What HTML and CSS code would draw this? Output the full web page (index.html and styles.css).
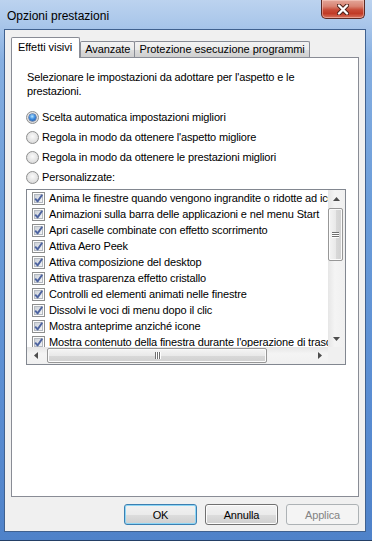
FILE: index.html
```html
<!DOCTYPE html>
<html>

<head>
    <meta charset="UTF-8">
    <title>Opzioni prestazioni</title>
    <link rel="stylesheet" href="styles.css">
</head>

<body>
    <svg class="defs" width="0" height="0">
        <defs>
            <linearGradient id="cbFill" x1="0" y1="0" x2="1" y2="1">
                <stop offset="0" stop-color="#c9ced6"/>
                <stop offset="1" stop-color="#f6f7f8"/>
            </linearGradient>
            <symbol id="check" viewBox="0 0 13 13">
                <rect x="0.5" y="0.5" width="12" height="12" fill="#fdfdfd" stroke="#8e8f8f"/>
                <rect x="2.5" y="2.5" width="8" height="8" fill="url(#cbFill)" stroke="#b4b9c0"/>
                <path d="M3.2 6.6 L5.6 9.4 L10.2 2.8" fill="none" stroke="#4e64a0" stroke-width="1.9" stroke-linejoin="round"/>
            </symbol>
        </defs>
    </svg>

    <div class="window">
        <div class="titlebar">
            <span class="title">Opzioni prestazioni</span>
            <div class="close">
                <svg width="12" height="11" viewBox="0 0 12 11">
                    <path d="M2 1.5 L10 9.5 M10 1.5 L2 9.5" stroke="#4a1f18" stroke-width="4.2" stroke-linecap="round"/>
                    <path d="M2 1.5 L10 9.5 M10 1.5 L2 9.5" stroke="#ffffff" stroke-width="2.4" stroke-linecap="round"/>
                </svg>
            </div>
        </div>

        <div class="client">
            <div class="tabs">
                <div class="tab active">Effetti visivi</div>
                <div class="tab">Avanzate</div>
                <div class="tab">Protezione esecuzione programmi</div>
            </div>

            <div class="panel">
                <p class="intro">Selezionare le impostazioni da adottare per l'aspetto e le prestazioni.</p>

                <div class="options">
                    <div class="option"><span class="radio checked"></span>Scelta automatica impostazioni migliori</div>
                    <div class="option"><span class="radio"></span>Regola in modo da ottenere l'aspetto migliore</div>
                    <div class="option"><span class="radio"></span>Regola in modo da ottenere le prestazioni migliori</div>
                    <div class="option"><span class="radio"></span>Personalizzate:</div>
                </div>

                <div class="listbox">
                    <div class="items">
                        <div class="item"><svg class="cb"><use href="#check"/></svg>Anima le finestre quando vengono ingrandite o ridotte ad icona</div>
                        <div class="item"><svg class="cb"><use href="#check"/></svg>Animazioni sulla barra delle applicazioni e nel menu Start</div>
                        <div class="item"><svg class="cb"><use href="#check"/></svg>Apri caselle combinate con effetto scorrimento</div>
                        <div class="item"><svg class="cb"><use href="#check"/></svg>Attiva Aero Peek</div>
                        <div class="item"><svg class="cb"><use href="#check"/></svg>Attiva composizione del desktop</div>
                        <div class="item"><svg class="cb"><use href="#check"/></svg>Attiva trasparenza effetto cristallo</div>
                        <div class="item"><svg class="cb"><use href="#check"/></svg>Controlli ed elementi animati nelle finestre</div>
                        <div class="item"><svg class="cb"><use href="#check"/></svg>Dissolvi le voci di menu dopo il clic</div>
                        <div class="item"><svg class="cb"><use href="#check"/></svg>Mostra anteprime anziché icone</div>
                        <div class="item"><svg class="cb"><use href="#check"/></svg>Mostra contenuto della finestra durante l'operazione di trascinamento</div>
                    </div>

                    <div class="vscroll">
                        <div class="arrow"><svg width="7" height="4"><path d="M0 4 L3.5 0 L7 4 Z" fill="#4d4d4d"/></svg></div>
                        <div class="vtrack">
                            <div class="vthumb"><span class="grip-h"></span><span class="grip-h"></span><span class="grip-h"></span></div>
                        </div>
                        <div class="arrow"><svg width="7" height="4"><path d="M0 0 L3.5 4 L7 0 Z" fill="#4d4d4d"/></svg></div>
                    </div>

                    <div class="hscroll">
                        <div class="arrow"><svg width="4" height="7"><path d="M4 0 L0 3.5 L4 7 Z" fill="#4d4d4d"/></svg></div>
                        <div class="htrack">
                            <div class="hthumb"><span class="grip-v"></span><span class="grip-v"></span><span class="grip-v"></span></div>
                        </div>
                        <div class="arrow"><svg width="4" height="7"><path d="M0 0 L4 3.5 L0 7 Z" fill="#4d4d4d"/></svg></div>
                    </div>

                    <div class="corner"></div>
                </div>
            </div>

            <div class="buttons">
                <button class="btn default">OK</button>
                <button class="btn">Annulla</button>
                <button class="btn" disabled>Applica</button>
            </div>
        </div>
    </div>
</body>

</html>
```

FILE: styles.css
```css
* {
    box-sizing: border-box;
    margin: 0;
    padding: 0;
}

body {
    font-family: "Liberation Sans", Arial, sans-serif;
    font-size: 11px;
    letter-spacing: -0.15px;
    color: #000;
    background-color: #5d8fd2;
}

.defs {
    position: absolute;
}

.window {
    width: 372px;
    height: 541px;
    display: flex;
    flex-direction: column;
    background: linear-gradient(to bottom, #bcd3ef 0, #a9c6ea 25px, #86afe1 60px, #6c9dd9 200px, #5a8dd2 400px, #4f82c9 541px);
    box-shadow: inset 0 -1px 0 #233f66;
}

/* barra del titolo */

.titlebar {
    height: 29px;
    display: flex;
    justify-content: space-between;
    align-items: flex-start;
    padding: 0 7px;
}

.title {
    font-size: 12px;
    line-height: 14px;
    letter-spacing: 0;
    padding-top: 9px;
}

.close {
    width: 44px;
    height: 19px;
    border: 1px solid #5b2a24;
    border-top: none;
    border-radius: 0 0 5px 5px;
    background: linear-gradient(to bottom, #e3a699 0, #d98473 35%, #c84b37 55%, #c13b26 75%, #d8735e 100%);
    box-shadow: inset 0 0 0 1px rgba(255, 220, 210, 0.45);
    display: flex;
    justify-content: center;
    align-items: center;
}

/* area client */

.client {
    flex: 1;
    margin: 0 6px 9px 4px;
    border: 1px solid #40618f;
    background-color: #f0f0f0;
    padding: 7px 6px 0 6px;
    display: flex;
    flex-direction: column;
}

.tabs {
    display: flex;
    align-items: flex-end;
    height: 21px;
    margin-bottom: -1px;
    position: relative;
    z-index: 1;
    letter-spacing: -0.05px;
}

.tab {
    height: 16px;
    margin-bottom: 1px;
    padding: 0 4px;
    line-height: 15px;
    border: 1px solid #898c95;
    border-bottom: none;
    border-radius: 2px 2px 0 0;
    background: linear-gradient(to bottom, #f3f3f3 0, #ebebeb 50%, #dddddd 51%, #cfcfcf 100%);
    white-space: nowrap;
}

.tab + .tab {
    margin-left: -1px;
}

.tab.active {
    height: 21px;
    margin-bottom: 0;
    padding: 0 7px 0 6px;
    line-height: 19px;
    background: #fff;
    position: relative;
    z-index: 2;
}

.tab.active + .tab {
    margin-left: 0;
}

.panel {
    height: 440px;
    border: 1px solid #898c95;
    background-color: #fff;
    padding: 12px 15px 0 15px;
}

.intro {
    width: 300px;
    line-height: 14px;
}

.options {
    margin-top: 9px;
    margin-left: -1px;
}

.option {
    height: 20px;
    display: flex;
    align-items: center;
    gap: 3px;
}

.radio {
    width: 13px;
    height: 13px;
    border-radius: 50%;
    border: 1px solid #8e8f8f;
    background: radial-gradient(circle at 50% 40%, #fafafa 0, #e4e4e4 55%, #cfcfcf 100%);
    display: flex;
    justify-content: center;
    align-items: center;
}

.radio.checked::after {
    content: "";
    width: 7px;
    height: 7px;
    border-radius: 50%;
    background: radial-gradient(circle at 45% 35%, #b8e6ff 0, #3f8ee0 45%, #14469a 100%);
    box-shadow: 0 0 0 0.5px #1d3f7a;
}

/* elenco con caselle */

.listbox {
    width: 320px;
    height: 176px;
    margin-top: 2px;
    margin-left: -1px;
    border: 1px solid #828790;
    display: grid;
    grid-template-columns: 301px 17px;
    grid-template-rows: 157px 17px;
}

.items {
    overflow: hidden;
}

.item {
    height: 16px;
    display: flex;
    align-items: center;
    gap: 4px;
    padding-left: 5px;
    white-space: nowrap;
}

.cb {
    width: 13px;
    height: 13px;
    flex-shrink: 0;
}

.vscroll {
    display: flex;
    flex-direction: column;
    background: linear-gradient(to right, #e6e6e6 0, #f4f4f4 40%, #f0f0f0 100%);
}

.arrow {
    flex: 0 0 17px;
    display: flex;
    justify-content: center;
    align-items: center;
}

.vtrack {
    flex: 1;
    padding: 1px 2px 0 0;
}

.vthumb {
    height: 53px;
    border: 1px solid #979797;
    border-radius: 2px;
    background: linear-gradient(to right, #f4f4f4 0, #e9e9e9 50%, #d9d9d9 51%, #d0d0d0 100%);
    box-shadow: inset 0 0 0 1px #fbfbfb;
    display: flex;
    flex-direction: column;
    justify-content: center;
    align-items: center;
    gap: 1px;
}

.grip-h {
    width: 7px;
    height: 1px;
    background-color: #6f6f6f;
    box-shadow: 0 1px 0 #fff;
}

.hscroll {
    display: flex;
    background: linear-gradient(to bottom, #e6e6e6 0, #f4f4f4 40%, #f0f0f0 100%);
}

.htrack {
    flex: 1;
    padding: 1px 0 1px 3px;
}

.hthumb {
    width: 220px;
    height: 100%;
    border: 1px solid #979797;
    border-radius: 2px;
    background: linear-gradient(to bottom, #f4f4f4 0, #e9e9e9 50%, #d9d9d9 51%, #d0d0d0 100%);
    box-shadow: inset 0 0 0 1px #fbfbfb;
    display: flex;
    justify-content: center;
    align-items: center;
    gap: 1px;
}

.grip-v {
    width: 1px;
    height: 7px;
    background-color: #6f6f6f;
    box-shadow: 1px 0 0 #fff;
}

.corner {
    background-color: #f0f0f0;
}

/* pulsanti */

.buttons {
    display: flex;
    justify-content: flex-end;
    gap: 8px;
    margin-top: 7px;
}

.btn {
    width: 73px;
    height: 21px;
    font-family: inherit;
    font-size: 11px;
    letter-spacing: inherit;
    color: #000;
    border: 1px solid #707070;
    border-radius: 3px;
    background: linear-gradient(to bottom, #f2f2f2 0, #ebebeb 50%, #dddddd 51%, #cfcfcf 100%);
    box-shadow: inset 0 0 0 1px #fcfcfc;
}

.btn.default {
    border-color: #3c7fb1;
    box-shadow: inset 0 0 0 1px #8ed6f5;
}

.btn:disabled {
    color: #838383;
    border-color: #adb2b5;
    background: #f4f4f4;
    box-shadow: none;
}
```
